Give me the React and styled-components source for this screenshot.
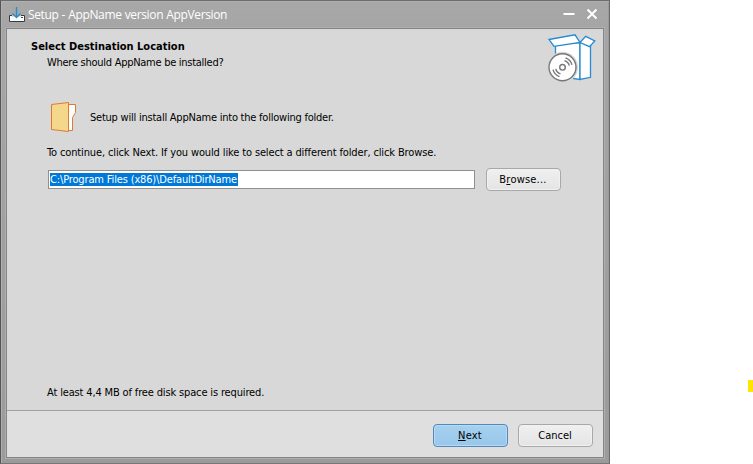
import React from 'react';
import styled, { createGlobalStyle } from 'styled-components';

const GlobalStyle = createGlobalStyle`
  * { box-sizing: border-box; }
  body { margin: 0; background: #fff; overflow: hidden; }
`;

const Desktop = styled.main`
  display: flex;
  width: 753px;
  height: 464px;
  background: #fff;
  font: 11px/14px "DejaVu Sans Condensed", "DejaVu Sans", sans-serif;
  color: #000;
`;

const Window = styled.section`
  display: flex;
  flex-direction: column;
  width: 610px;
  height: 464px;
  padding: 0 5px 5px;
  background: linear-gradient(#a8a8a8, #a5a5a5 28px, #9b9b9b);
  border: 1px solid #6c6c6c;
  border-left-color: #555;
  border-bottom-color: #777;
  box-shadow: inset 1px 1px #b0b0b0, inset -1px -1px #999;
`;

const TitleBar = styled.header`
  display: flex;
  align-items: center;
  flex: none;
  height: 27px;
  padding: 0 1px 0 3px;
`;

const Title = styled.h1`
  flex: 1;
  margin: 0 0 0 3px;
  font: 400 12px/18px "Open Sans", "Noto Sans", sans-serif;
  letter-spacing: -0.35px;
  word-spacing: 0.3px;
  color: #fff;
  white-space: nowrap;
`;

const WindowButton = styled.button`
  display: flex;
  align-items: center;
  justify-content: center;
  width: 23px;
  height: 20px;
  padding: 0 0 1px;
  border: 0;
  background: none;
  color: #fff;
`;

const Client = styled.div`
  display: flex;
  flex: 1;
  flex-direction: column;
  border: 1px solid #858585;
  background: #d8d8d8;
  box-shadow: 0 0 0 1px #afafaf;
`;

const Page = styled.div`
  display: flex;
  flex: 1;
  flex-direction: column;
  padding: 5px 6px 0 24px;
`;

const Heading = styled.div`
  display: flex;
  justify-content: space-between;
  height: 62px;
`;

const HeadingText = styled.div`
  padding-top: 6px;
`;

const PageTitle = styled.h2`
  margin: 0;
  font: 700 11px/14px "DejaVu Sans Condensed", "DejaVu Sans", sans-serif;
`;

const Text = styled.p`
  margin: 0;
  letter-spacing: ${({ $spacing }) => $spacing || 0}px;
  white-space: nowrap;
`;

const Subtitle = styled(Text)`
  margin: 2px 0 0 16px;
`;

const Body = styled.div`
  display: flex;
  flex: 1;
  flex-direction: column;
  padding: 4px 36px 10px 16px;
`;

const FolderRow = styled.div`
  display: flex;
  align-items: center;
  gap: 13px;
  height: 34px;
  padding-left: 3px;
`;

const FolderMessage = styled(Text)`
  padding-top: 2px;
`;

const Instruction = styled(Text)`
  margin-top: 12px;
`;

const PathRow = styled.div`
  display: flex;
  align-items: center;
  justify-content: space-between;
  height: 23px;
  margin: 8px 0 auto 1px;
`;

const PathField = styled.div`
  display: flex;
  align-items: center;
  width: 427px;
  height: 19px;
  padding-left: 1px;
  border: 1px solid #909090;
  background: #fff;
`;

const Selection = styled.span`
  height: 13px;
  width: 188px;
  line-height: 13px;
  background: #0078d7;
  color: #fff;
  letter-spacing: -0.15px;
  white-space: nowrap;
`;

const Button = styled.button`
  width: 75px;
  height: 23px;
  padding: 1px 1px 0 0;
  border: 1px solid ${({ $primary }) => ($primary ? '#5488bb' : '#a8a8a8')};
  border-radius: 4px;
  background: ${({ $primary }) => ($primary ? 'linear-gradient(#a6d0ef, #98c7ea)' : 'linear-gradient(#f0f0f0, #e4e4e4)')};
  box-shadow: inset 0 0 0 1px ${({ $primary }) => ($primary ? '#b7dbf5' : '#f1f1f1')};
  font: 11px/14px "DejaVu Sans Condensed", "DejaVu Sans", sans-serif;
  letter-spacing: ${({ $spacing }) => $spacing || 0}px;
  color: #000;
`;

const Mnemonic = styled.span`
  text-decoration: underline;
  text-decoration-thickness: 1px;
  text-underline-offset: 1px;
  text-decoration-skip-ink: none;
`;

const Footer = styled.footer`
  display: flex;
  justify-content: flex-end;
  gap: 10px;
  height: 47px;
  padding: 13px 10px 0 0;
  border-top: 1px solid #a0a0a0;
  background: #dfdfdf;
`;

const EdgeMarker = styled.span`
  width: 5px;
  height: 12px;
  margin: 380px 0 0 auto;
  background: #ffe600;
`;

const SetupIcon = () => (
  <svg width="16" height="16" viewBox="0 0 16 16" fill="none">
    <path d="M.5 8.5h15v6H.5z" fill="#fff" stroke="#3b3b3b" />
    <path d="M3 8h9v1.5H3z" fill="#bdbdbd" />
    <path d="M12 10h2v1h-2z" fill="#444" />
    <path d="M7.5 -1v12M3.5 6.5l4 4 4-4" stroke="#278bd0" strokeWidth="1.4" />
  </svg>
);

const FolderIcon = () => (
  <svg width="27" height="32" viewBox="0 0 27 32" fill="none" stroke="#e17931">
    <path d="M18.5 3.5h7v8l-3 5v13h-4z" fill="#fff" />
    <path d="M1.5 3.5l17-2v29l-17-2z" fill="#f5d78c" />
  </svg>
);

const PackageIcon = () => (
  <svg width="50" height="50" viewBox="0 0 50 50" fill="none">
    <g stroke="#268bd0" strokeWidth="1.3" fill="#fff">
      <path d="M8.5 10l24.5-1.5v37L8.5 42z" />
      <path d="M33 8.5l10.5 1V43.3L33 45.5z" />
      <path d="M2 5.5L28 .8l5 7.7-26 3.8z" />
      <path d="M33 8.5L38.7 2.3 47.8 7l-5.3 5.7z" />
    </g>
    <circle cx="15.5" cy="33.3" r="15.5" fill="#d8d8d8" />
    <circle cx="15.5" cy="33.3" r="13.5" fill="#fff" stroke="#777" strokeWidth="1.4" />
    <g stroke="#777" strokeWidth="1.4">
      <circle cx="15.5" cy="33.3" r="2.8" />
      <path d="M17.5 26.7a7 7 0 0 1 4.8 5M18.5 23.9a10 10 0 0 1 6.5 7M13.5 39.9a7 7 0 0 1-4.8-5M12.5 42.7a10 10 0 0 1-6.5-7" />
    </g>
  </svg>
);

const MinimizeIcon = () => (
  <svg width="12" height="12" viewBox="0 0 12 12" stroke="currentColor" strokeWidth="2">
    <path d="M.5 6h11" />
  </svg>
);

const CloseIcon = () => (
  <svg width="12" height="12" viewBox="0 0 12 12" stroke="currentColor" strokeWidth="2">
    <path d="M1.5 1.5l9 9M10.5 1.5l-9 9" />
  </svg>
);

export default function App() {
  return (
    <>
      <GlobalStyle />
      <Desktop>
        <Window>
          <TitleBar>
            <SetupIcon />
            <Title>Setup - AppName version AppVersion</Title>
            <WindowButton aria-label="Minimize"><MinimizeIcon /></WindowButton>
            <WindowButton aria-label="Close"><CloseIcon /></WindowButton>
          </TitleBar>
          <Client>
            <Page>
              <Heading>
                <HeadingText>
                  <PageTitle>Select Destination Location</PageTitle>
                  <Subtitle $spacing={-0.27}>Where should AppName be installed?</Subtitle>
                </HeadingText>
                <PackageIcon />
              </Heading>
              <Body>
                <FolderRow>
                  <FolderIcon />
                  <FolderMessage $spacing={-0.23}>Setup will install AppName into the following folder.</FolderMessage>
                </FolderRow>
                <Instruction $spacing={-0.13}>
                  To continue, click Next. If you would like to select a different folder, click Browse.
                </Instruction>
                <PathRow>
                  <PathField><Selection>C:\Program Files (x86)\DefaultDirName</Selection></PathField>
                  <Button $spacing={0.2}>B<Mnemonic>r</Mnemonic>owse...</Button>
                </PathRow>
                <Text $spacing={-0.15}>At least 4,4 MB of free disk space is required.</Text>
              </Body>
            </Page>
            <Footer>
              <Button $primary $spacing={0.2}><Mnemonic>N</Mnemonic>ext</Button>
              <Button>Cancel</Button>
            </Footer>
          </Client>
        </Window>
        <EdgeMarker />
      </Desktop>
    </>
  );
}
